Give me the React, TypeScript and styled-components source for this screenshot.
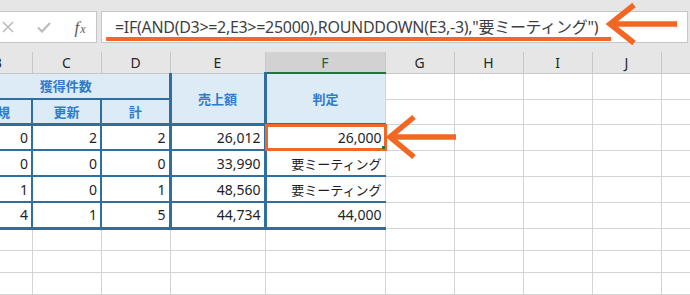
import React from "react";
import styled, { createGlobalStyle, css } from "styled-components";

const BLUE = "#2f6f9f";
const ORANGE = "#f26724";
const GRID = "1px solid #d4d4d4";
const THIN = `2px solid ${BLUE}`;
const THICK = `3px solid ${BLUE}`;

const GlobalStyle = createGlobalStyle`
  html, body { margin: 0; padding: 0; background: #fff; }
  body { font-family: "Noto Sans", "Noto Sans CJK JP", sans-serif; }
`;

const Screen = styled.div`
  position: relative;
  width: 690px;
  height: 295px;
  overflow: hidden;
  background: #fff;
  display: flex;
  flex-direction: column;
`;

const FormulaBar = styled.div`
  height: 52px;
  flex: none;
  background: #e6e6e6;
  display: flex;
  align-items: flex-start;
  gap: 4px;
  padding: 11px 2px 0 0;
  box-sizing: border-box;
`;

const ButtonBox = styled.div`
  width: 108px;
  height: 32px;
  margin-left: -11px;
  background: #fff;
  border: 1px solid #c6c6c6;
  box-sizing: border-box;
  display: grid;
  grid-template-columns: repeat(3, 36px);
  align-items: center;
  justify-items: center;
`;

const IconSlot = styled.span`
  display: flex;
  align-items: center;
  justify-content: center;
  width: 36px;
  height: 30px;
`;

const FxLabel = styled.span`
  font-family: "Liberation Serif", "DejaVu Serif", serif;
  font-style: italic;
  font-size: 17px;
  color: #5a5a5a;
  line-height: 1;
  & > small {
    font-size: 12px;
    margin-left: 1px;
  }
`;

const FormulaBox = styled.div`
  position: relative;
  flex: 1;
  height: 32px;
  background: #fff;
  border: 1px solid #c6c6c6;
  box-sizing: border-box;
  padding-left: 13px;
  display: flex;
  align-items: center;
`;

const FormulaText = styled.span`
  font-family: "Noto Sans", "Noto Sans CJK JP", sans-serif;
  font-size: 16px;
  color: #3f3f3f;
  white-space: nowrap;
  letter-spacing: -0.3px;
  margin-top: -3px;
`;

const Underline = styled.div`
  position: absolute;
  left: 4px;
  top: 25px;
  width: 505px;
  height: 4px;
  background: ${ORANGE};
`;

const Sheet = styled.div`
  flex: 1;
  overflow: hidden;
`;

const Grid = styled.table`
  margin-left: -37px;
  border-collapse: collapse;
  table-layout: fixed;
  width: 767px;
  font-family: "Noto Sans", "Noto Sans CJK JP", sans-serif;
`;

const Row = styled.tr<{ $h: number }>`
  height: ${(p) => p.$h}px;
`;

const ColHead = styled.th<{ $active?: boolean }>`
  padding: 0;
  font-weight: normal;
  font-size: 14px;
  text-align: center;
  color: ${(p) => (p.$active ? "#1f5f3a" : "#262626")};
  background: ${(p) => (p.$active ? "#d2d2d2" : "#e6e6e6")};
  border-right: 1px solid #c8c8c8;
  border-bottom: ${(p) => (p.$active ? "2px solid #217346" : "1px solid #c8c8c8")};
`;

const HeadCell = styled.td<{ $right: string; $bottom: string }>`
  padding: 0;
  text-align: center;
  vertical-align: middle;
  background: #dcebf5;
  color: #2e7bcb;
  font-family: "Noto Sans CJK JP", sans-serif;
  font-weight: bold;
  font-size: 13px;
  border-right: ${(p) => p.$right};
  border-bottom: ${(p) => p.$bottom};
`;

const DataCell = styled.td<{ $right: string; $bottom: string; $selected?: boolean; $jp?: boolean }>`
  position: relative;
  padding: 0 3px 0 0;
  text-align: right;
  vertical-align: middle;
  font-size: ${(p) => (p.$jp ? "13px" : "14px")};
  font-family: ${(p) => (p.$jp ? `"Noto Sans CJK JP", sans-serif` : `"Noto Sans", "Noto Sans CJK JP", sans-serif`)};
  color: #1e1e28;
  border-right: ${(p) => p.$right};
  border-bottom: ${(p) => p.$bottom};
  ${(p) =>
    p.$selected &&
    css`
      &::after {
        content: "";
        position: absolute;
        left: -2px;
        top: -2px;
        right: -2px;
        bottom: -2px;
        border: 3px solid ${ORANGE};
        pointer-events: none;
      }
      &::before {
        content: "";
        position: absolute;
        right: 0px;
        bottom: 0px;
        width: 3px;
        height: 3px;
        background: #217346;
        z-index: 1;
      }
    `}
`;

const EmptyCell = styled.td`
  padding: 0;
  border-right: ${GRID};
  border-bottom: ${GRID};
`;

const Annotations = styled.svg`
  position: absolute;
  left: 0;
  top: 0;
  pointer-events: none;
`;

const cols = ["B", "C", "D", "E", "F", "G", "H", "I", "J", "K"];
const widths = [69, 69, 69, 95, 120, 69, 69, 69, 69, 69];

const data: Array<[number, number, number, string, string]> = [
  [0, 2, 2, "26,012", "26,000"],
  [0, 0, 0, "33,990", "要ミーティング"],
  [1, 0, 1, "48,560", "要ミーティング"],
  [4, 1, 5, "44,734", "44,000"],
];

const Empties = ({ n }: { n: number }) => (
  <>
    {Array.from({ length: n }).map((_, i) => (
      <EmptyCell key={i} />
    ))}
  </>
);

const Arrow = ({ tipX, y, length, arm, spread }: { tipX: number; y: number; length: number; arm: number; spread: number }) => (
  <g stroke={ORANGE} strokeWidth={5.5} fill="none" strokeLinecap="butt" strokeLinejoin="miter">
    <line x1={tipX + 3} y1={y} x2={tipX + length} y2={y} />
    <polyline points={`${tipX + arm},${y - spread} ${tipX},${y} ${tipX + arm},${y + spread}`} />
  </g>
);

export default function App() {
  return (
    <>
      <GlobalStyle />
      <Screen>
        <FormulaBar>
          <ButtonBox>
            <IconSlot>
              <svg width="12" height="12" viewBox="0 0 12 12">
                <path d="M1 1 L11 11 M11 1 L1 11" stroke="#bcbcbc" strokeWidth="1.6" />
              </svg>
            </IconSlot>
            <IconSlot>
              <svg width="14" height="11" viewBox="0 0 14 11">
                <path d="M1 5.5 L5 9.5 L13 1" stroke="#bcbcbc" strokeWidth="2.2" fill="none" />
              </svg>
            </IconSlot>
            <IconSlot>
              <FxLabel>
                f<small>x</small>
              </FxLabel>
            </IconSlot>
          </ButtonBox>
          <FormulaBox>
            <FormulaText>=IF(AND(D3&gt;=2,E3&gt;=25000),ROUNDDOWN(E3,-3),"要ミーティング")</FormulaText>
            <Underline />
          </FormulaBox>
        </FormulaBar>
        <Sheet>
          <Grid>
            <colgroup>
              {widths.map((w, i) => (
                <col key={i} style={{ width: w }} />
              ))}
            </colgroup>
            <tbody>
              <Row $h={21}>
                {cols.map((c) => (
                  <ColHead key={c} $active={c === "F"}>
                    {c}
                  </ColHead>
                ))}
              </Row>
              <Row $h={26}>
                <HeadCell colSpan={3} $right={THICK} $bottom={THIN}>
                  獲得件数
                </HeadCell>
                <HeadCell rowSpan={2} $right={THICK} $bottom={THICK}>
                  売上額
                </HeadCell>
                <HeadCell rowSpan={2} $right={GRID} $bottom={THICK}>
                  判定
                </HeadCell>
                <Empties n={5} />
              </Row>
              <Row $h={25}>
                <HeadCell $right={THIN} $bottom={THICK}>
                  新規
                </HeadCell>
                <HeadCell $right={THIN} $bottom={THICK}>
                  更新
                </HeadCell>
                <HeadCell $right={THICK} $bottom={THICK}>
                  計
                </HeadCell>
                <Empties n={5} />
              </Row>
              {data.map((r, i) => {
                const bottom = i === data.length - 1 ? THICK : THIN;
                const jp = /[^\d,]/.test(r[4]);
                return (
                  <Row key={i} $h={26}>
                    <DataCell $right={THIN} $bottom={bottom}>{r[0]}</DataCell>
                    <DataCell $right={THIN} $bottom={bottom}>{r[1]}</DataCell>
                    <DataCell $right={THICK} $bottom={bottom}>{r[2]}</DataCell>
                    <DataCell $right={THICK} $bottom={bottom}>{r[3]}</DataCell>
                    <DataCell $right={GRID} $bottom={bottom} $selected={i === 0} $jp={jp}>
                      {r[4]}
                    </DataCell>
                    <Empties n={5} />
                  </Row>
                );
              })}
              {[0, 1, 2].map((i) => (
                <Row key={`e${i}`} $h={22}>
                  <Empties n={10} />
                </Row>
              ))}
            </tbody>
          </Grid>
        </Sheet>
        <Annotations width={690} height={295}>
          <Arrow tipX={610} y={24} length={67} arm={24} spread={19} />
          <Arrow tipX={390} y={137} length={66} arm={24} spread={20} />
        </Annotations>
      </Screen>
    </>
  );
}
